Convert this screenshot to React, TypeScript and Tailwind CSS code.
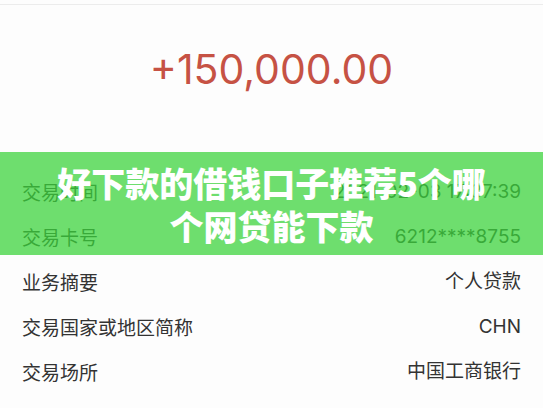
import React from "react";

const rows: [string, string][] = [
  ["交易时间", "2021-02-03 17:37:39"],
  ["交易卡号", "6212****8755"],
  ["业务摘要", "个人贷款"],
  ["交易国家或地区简称", "CHN"],
  ["交易场所", "中国工商银行"],
  ["交易金额", "150,000.00"],
];

export default function App() {
  return (
    <div
      className="relative w-[543px] h-[408px] overflow-hidden bg-[#fdfdfd]"
      style={{ fontFamily: '"Noto Sans CJK SC", "Noto Sans", sans-serif' }}
    >
      <div className="h-[4px]" />
      <div className="h-px bg-[#ececec]" />
      <div className="h-[165px] flex justify-center pt-[34px]">
        <div
          className="text-[41px] leading-[60px] text-[#c65244]"
          style={{ fontFamily: 'Inter, "Noto Sans", sans-serif' }}
        >
          +150,000.00
        </div>
      </div>
      <div className="flex flex-col px-[22px]">
        {rows.map(([k, v]) => (
          <div key={k} className="h-[45px] flex items-center justify-between text-[19px] text-[#333333]">
            <span>{k}</span>
            <span style={{ fontFamily: 'Inter, "Noto Sans CJK SC", sans-serif' }}>{v}</span>
          </div>
        ))}
      </div>
      <div className="absolute left-0 right-0 top-[152px] h-[103px] bg-[rgba(60,210,60,0.74)] flex flex-col items-center justify-center">
        <div className="text-white text-[34px] leading-[43px] font-black text-center w-[440px]">
          好下款的借钱口子推荐5个哪个网贷能下款
        </div>
      </div>
    </div>
  );
}
